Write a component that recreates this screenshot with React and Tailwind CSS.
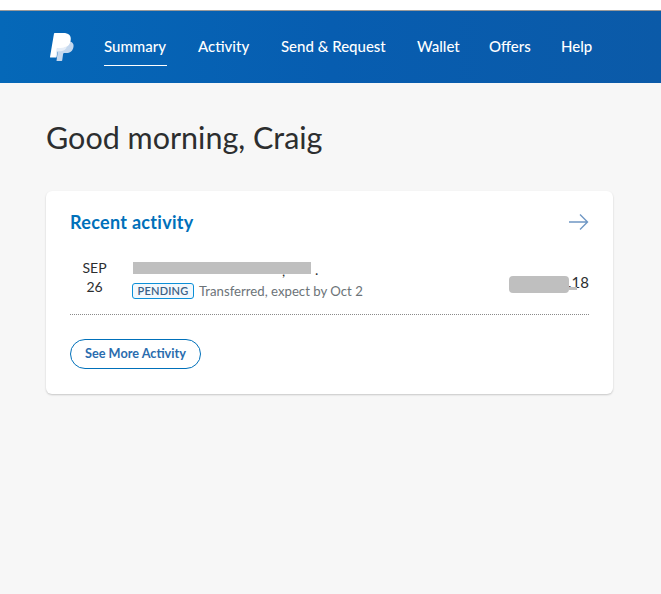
import React from 'react';

const navItems = [
  { label: 'Summary', width: 'w-[63px]' },
  { label: 'Activity', width: 'w-[52px]' },
  { label: 'Send & Request', width: 'w-[105px]' },
  { label: 'Wallet', width: 'w-[41px]' },
  { label: 'Offers', width: 'w-[41px]' },
  { label: 'Help', width: 'w-[31px]' },
];

function PayPalLogo() {
  return (
    <svg width="24" height="28" viewBox="0 0 24 28" className="block">
      <path d="M9 8.500h9.500c3.600 0 5.500 2 5 5.200-.6 4.300-3.500 6.300-7.400 6.300h-1.900c-.6 0-1 .4-1.100 1l-.9 6.500c-.1.300-.3.500-.6.500H6.500z" fill="#c5d8ee" />
      <path d="M4 .5c.1-.3.4-.5.7-.5h8.600c5.100 0 8.200 2.400 7.400 7.200-.7 5-4.200 7.800-9 7.800H8.400c-.6 0-1 .4-1.100 1l-1.200 8c-.1.300-.3.500-.6.500H.6c-.4 0-.6-.3-.6-.6z" fill="#ffffff" />
      <path d="M6.500 15.500c.2-.3.600-.5 1-.5h3.200c2.500 0 4.600-.7 6.200-2-.5 3.200-2.800 5.200-6 5.200H8.500c-.6 0-1 .4-1.100 1l-.9 5.300H5.500z" fill="#e6eef8" />
    </svg>
  );
}

export default function App() {
  return (
    <div className="min-h-[594px] bg-white pt-2.5 font-['Lato',sans-serif]">
      {/* Header */}
      <header className="flex h-[73px] items-center border-t border-[#9a9a9a] bg-gradient-to-r from-[#0568b8] via-[#075db0] to-[#0b5aa8] pl-[50px]">
        <PayPalLogo />
        <nav className="-mt-[1px] ml-[30px] flex gap-[31px]">
          {navItems.map((item, i) => (
            <a
              key={item.label}
              className={
                item.width +
                (i === 0
                  ? ' border-b border-white py-[9px] text-[15px] leading-5 font-medium whitespace-nowrap text-white'
                  : ' py-[9px] text-[15px] leading-5 font-medium whitespace-nowrap text-white')
              }
            >
              {item.label}
            </a>
          ))}
        </nav>
      </header>

      <main className="h-[511px] bg-[#f7f7f7] px-[46px] pt-[32px]">
        <h1 className="text-[30.5px] leading-[44px] text-[#2c2e2f]">Good morning, Craig</h1>

        {/* Recent activity */}
        <section className="mt-[32px] h-[203px] w-[567px] rounded-md bg-white px-6 pt-[17px] shadow-[0_1px_2px_rgba(0,0,0,0.2)]">
          <div className="flex items-center justify-between">
            <h2 className="text-[18px] leading-7 font-bold tracking-[0.3px] text-[#0070ba]">Recent activity</h2>
            <svg width="20" height="18" viewBox="0 0 20 18" fill="none" stroke="#6f97c4" strokeWidth="1.4">
              <path d="M0 9h18.500M11 1.500 18.500 9 11 16.500" />
            </svg>
          </div>

          <div className="flex h-[79px] border-b border-dotted border-[#8a8a8a] pt-[24px]">
            <div className="-mt-[2px] ml-[6px] w-[37px] text-center text-[14px] leading-[19px] text-[#2c2e2f]">
              <div>SEP</div>
              <div>26</div>
            </div>
            <div className="ml-[19px] flex-1">
              <div className="relative h-5 text-[14px] leading-5 text-[#2c2e2f]">
                <span className="absolute left-[183px] top-0">.</span>
                <span className="absolute left-[150px] top-[1px]">,</span>
                <div className="absolute left-[1px] top-[2px] h-3 w-[178px] bg-[#bfbfbf]" />
              </div>
              <div className="mt-[3px] flex items-center gap-[5px]">
                <span className="flex h-4 w-[62px] items-center justify-center rounded-[3px] border border-[#0b8fd8] bg-[#f2f8fd] text-[11px] font-semibold tracking-[0.2px] text-[#3a5f85]">
                  PENDING
                </span>
                <span className="text-[13.2px] leading-4 text-[#6c7378]">Transferred, expect by Oct 2</span>
              </div>
            </div>
            <div className="relative mt-[12px] h-5 w-20 text-right text-[15px] leading-5 text-[#2c2e2f]">
              .18
              <div className="absolute left-0 top-[4px] h-[17px] w-[60px] rounded-sm bg-[#bfbfbf]" />
              <div className="absolute left-[60px] top-[15px] h-[3px] w-2 bg-[#bfbfbf]" />
            </div>
          </div>

          <button className="mt-[24px] h-[30px] w-[131px] rounded-full border border-[#0070ba] bg-white text-[12.7px] font-bold text-[#2a6cae]">
            See More Activity
          </button>
        </section>
      </main>
    </div>
  );
}
